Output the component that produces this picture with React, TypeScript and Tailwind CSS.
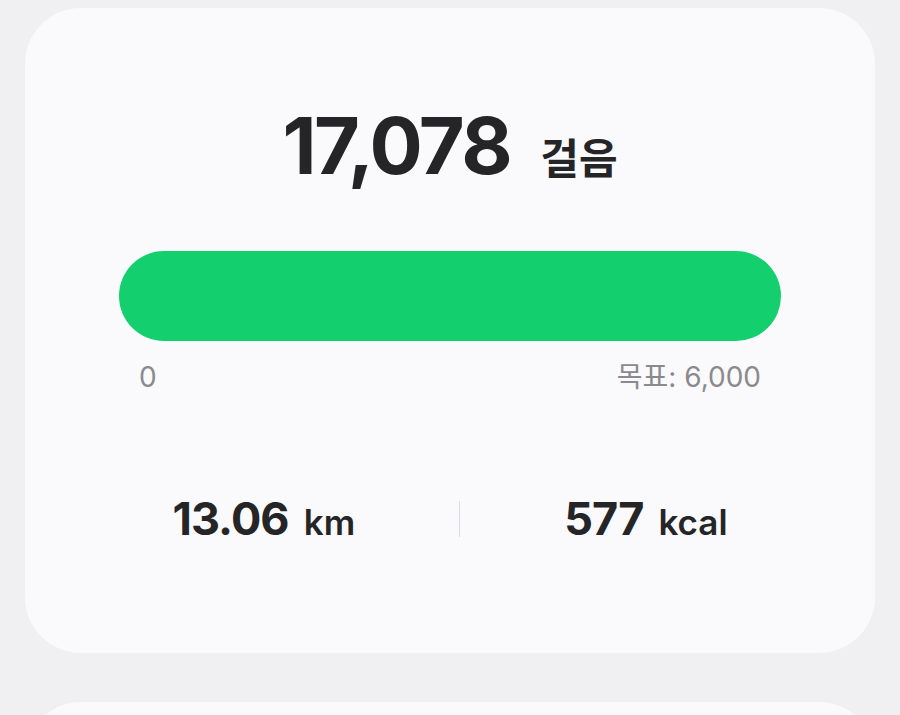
export default function App() {
  return (
    <div
      className="min-h-screen bg-[#f0f0f2] px-[25px] pt-[8px] flex flex-col gap-[49px] overflow-hidden h-[715px]"
      style={{ fontFamily: 'Inter, "Noto Sans CJK KR", sans-serif' }}
    >
      {/* Steps card */}
      <section className="h-[645px] shrink-0 rounded-[56px] bg-[#fafafc] px-[94px] pt-[98px] text-[#252528]">
        <div className="flex items-baseline justify-center gap-[30px]">
          <span className="text-[79px] font-bold leading-none tracking-[-0.03em]">17,078</span>
          <span className="text-[42px] font-bold leading-none">걸음</span>
        </div>

        {/* Progress */}
        <div className="mt-[66px] h-[90px] rounded-full bg-[#13cf6e]" />
        <div className="mt-[16px] flex justify-between px-[20px] text-[28px] leading-[40px] text-[#8a8a8e]">
          <span>0</span>
          <span>목표: 6,000</span>
        </div>

        {/* Distance / calories */}
        <div className="mt-[99px] flex items-center justify-center gap-[104px]">
          <div className="flex items-baseline gap-[15px]">
            <span className="text-[45px] font-bold leading-none tracking-[-0.02em]">13.06</span>
            <span className="text-[35px] font-semibold leading-none">km</span>
          </div>
          <div className="h-[36px] w-px bg-[#dcdce0]" />
          <div className="flex items-baseline gap-[15px]">
            <span className="text-[45px] font-bold leading-none tracking-[-0.02em]">577</span>
            <span className="text-[35px] font-semibold leading-none">kcal</span>
          </div>
        </div>
      </section>

      <section className="h-[300px] shrink-0 rounded-[56px] bg-[#fafafc]" />
    </div>
  );
}
